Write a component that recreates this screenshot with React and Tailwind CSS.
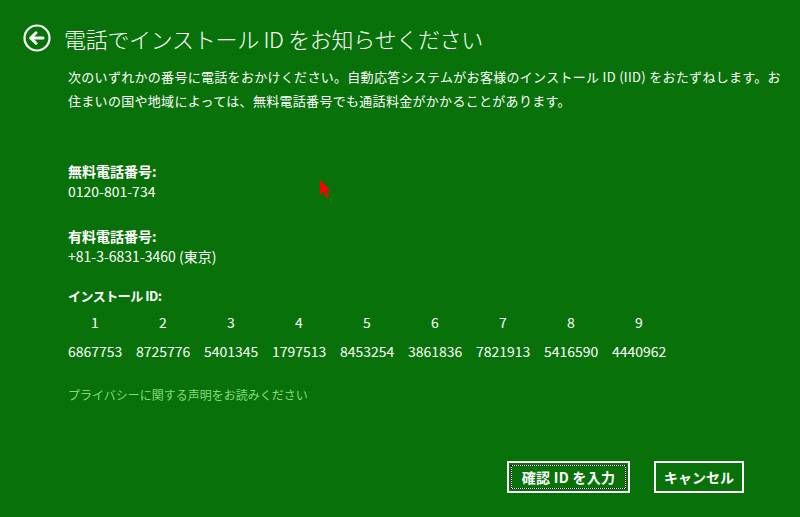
import React from "react";

const ids = [
  "6867753",
  "8725776",
  "5401345",
  "1797513",
  "8453254",
  "3861836",
  "7821913",
  "5416590",
  "4440962",
];

const BackIcon = () => (
  <svg width="28" height="28" viewBox="0 0 28 28" fill="none">
    <circle cx="14" cy="14" r="12.5" stroke="white" strokeWidth="2.2" />
    <path d="M8 14h12" stroke="white" strokeWidth="3" strokeLinecap="round" />
    <path
      d="M13 8.8 7.8 14l5.2 5.2"
      stroke="white"
      strokeWidth="3"
      strokeLinecap="round"
      strokeLinejoin="round"
    />
  </svg>
);

const Cursor = () => (
  <svg
    className="absolute left-[320px] top-[180px]"
    width="14"
    height="20"
    viewBox="0 0 14 20"
  >
    <path d="M0 0v15l3.6-3.4 2.6 6.2 2.6-1.1-2.6-6H11z" fill="#ff0000" />
  </svg>
);

export default function App() {
  return (
    <div
      className="relative w-full h-[517px] bg-[#087109] text-white overflow-hidden"
      style={{ fontFamily: '"Noto Sans CJK JP", "Noto Sans", sans-serif' }}
    >
      {/* header */}
      <div className="flex items-center pl-[23px] pt-[24px] gap-[13px]">
        <BackIcon />
        <h1 className="text-[22px] font-light tracking-[-0.3px] leading-[28px]">
          電話でインストール ID をお知らせください
        </h1>
      </div>

      <div className="pl-[68px]">
        <p className="mt-[13px] text-[13px] leading-[24px] tracking-[0.3px]">
          次のいずれかの番号に電話をおかけください。自動応答システムがお客様のインストール ID (IID) をおたずねします。お
          <br />
          住まいの国や地域によっては、無料電話番号でも通話料金がかかることがあります。
        </p>

        <div className="mt-[48px] text-[14px] leading-[20px]">
          <div className="font-bold">無料電話番号:</div>
          <div>0120-801-734</div>
        </div>

        <div className="mt-[25px] text-[14px] leading-[20px]">
          <div className="font-bold">有料電話番号:</div>
          <div>+81-3-6831-3460 (東京)</div>
        </div>

        <div className="mt-[20px] text-[13px] leading-[20px] font-bold tracking-[-0.5px]">
          インストール ID:
        </div>

        <div className="mt-[6px] grid grid-cols-[repeat(9,54px)] gap-x-[14px] text-[14px] leading-[20px] text-center">
          {ids.map((id, i) => (
            <div key={i}>{i + 1}</div>
          ))}
        </div>
        <div className="mt-[9px] grid grid-cols-[repeat(9,54px)] gap-x-[14px] text-[14px] leading-[20px] text-center">
          {ids.map((id) => (
            <div key={id}>{id}</div>
          ))}
        </div>

        <div className="mt-[24px] text-[12px] leading-[20px] text-[#86d97f]">
          プライバシーに関する声明をお読みください
        </div>
      </div>

      <div className="flex justify-end gap-[24px] pr-[56px] mt-[56px]">
        <button className="relative w-[123px] h-[32px] border-2 border-white text-[14px] font-bold tracking-[0.3px]">
          <span className="absolute inset-[2px] border border-white" />
          <span className="absolute inset-[2px] border border-dotted border-black" />
          <span className="relative">確認 ID を入力</span>
        </button>
        <button className="w-[90px] h-[32px] border-2 border-white text-[14px] font-bold">
          キャンセル
        </button>
      </div>

      <Cursor />
    </div>
  );
}
